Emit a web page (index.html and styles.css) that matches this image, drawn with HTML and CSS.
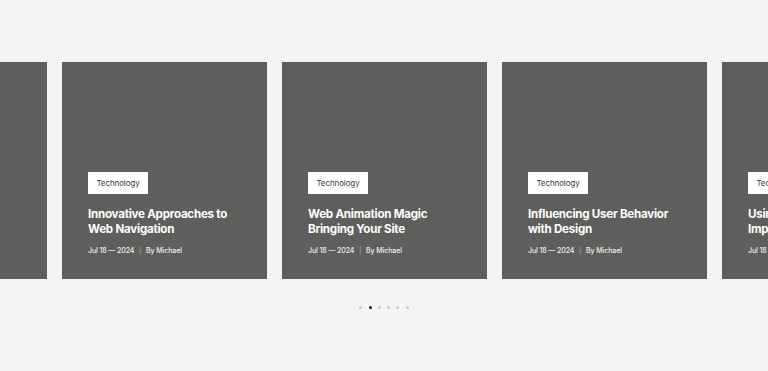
FILE: index.html
```html
<!DOCTYPE html>
<html lang="en">
<head>
<meta charset="utf-8">
<link rel="stylesheet" href="styles.css">
</head>
<body>
<section class="slider">
  <div class="track">
    <article class="card">
      <span class="tag">Technology</span>
      <h3 class="title">Web Design Basics</h3>
      <p class="meta">Jul 18 — 2024 <span class="sep">|</span> By Michael</p>
    </article>
    <article class="card">
      <span class="tag">Technology</span>
      <h3 class="title">Innovative Approaches to Web Navigation</h3>
      <p class="meta">Jul 18 — 2024 <span class="sep">|</span> By Michael</p>
    </article>
    <article class="card">
      <span class="tag">Technology</span>
      <h3 class="title">Web Animation Magic Bringing Your Site</h3>
      <p class="meta">Jul 18 — 2024 <span class="sep">|</span> By Michael</p>
    </article>
    <article class="card">
      <span class="tag">Technology</span>
      <h3 class="title">Influencing User Behavior with Design</h3>
      <p class="meta">Jul 18 — 2024 <span class="sep">|</span> By Michael</p>
    </article>
    <article class="card">
      <span class="tag">Technology</span>
      <h3 class="title">Using Typography to Improve Readability</h3>
      <p class="meta">Jul 18 — 2024 <span class="sep">|</span> By Michael</p>
    </article>
  </div>
  <div class="dots">
    <span class="dot"></span>
    <span class="dot active"></span>
    <span class="dot"></span>
    <span class="dot"></span>
    <span class="dot"></span>
    <span class="dot"></span>
  </div>
</section>
</body>
</html>
```
FILE: styles.css
```css
html, body {
  margin: 0;
  padding: 0;
  background: #f4f4f4;
  font-family: "Inter", "Noto Sans", sans-serif;
}
.slider {
  width: 768px;
  height: 371px;
  overflow: hidden;
  padding-top: 62px;
  box-sizing: border-box;
}
.track {
  display: flex;
  gap: 15.5px;
  margin-left: -158px;
}
.card {
  flex: 0 0 204.5px;
  height: 217px;
  background: #5e5f5d;
  box-sizing: border-box;
  padding: 0 26px 23px;
  display: flex;
  flex-direction: column;
  justify-content: flex-end;
  align-items: flex-start;
}
.tag {
  display: flex;
  align-items: center;
  justify-content: center;
  width: 60px;
  height: 22px;
  background: #ffffff;
  color: #3a3a3a;
  font-size: 8px;
  letter-spacing: -0.1px;
}
.title {
  margin: 12.75px 0 0;
  color: #ffffff;
  font-size: 11.6px;
  font-weight: 700;
  line-height: 14.5px;
  letter-spacing: -0.25px;
}
.meta {
  margin: 10px 0 0;
  color: #f0f0f0;
  font-size: 7px;
  line-height: 10px;
  font-weight: 500;
  letter-spacing: -0.1px;
}
.sep {
  color: #9a9b99;
  margin: 0 3px;
}
.dots {
  display: flex;
  justify-content: center;
  gap: 6.3px;
  margin-top: 26.5px;
}
.dot {
  width: 3px;
  height: 3px;
  border-radius: 50%;
  background: #c8c8c8;
}
.dot.active {
  background: #111111;
}
```
